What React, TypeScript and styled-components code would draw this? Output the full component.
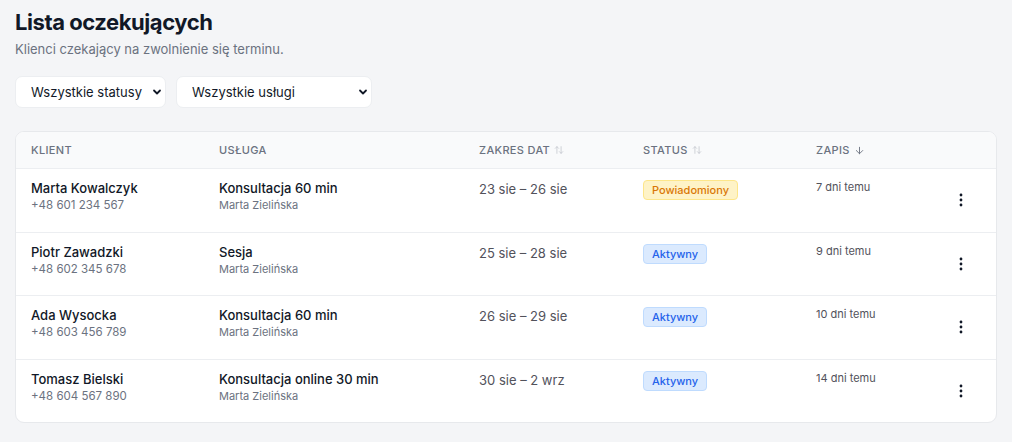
import React from 'react'
import styled, { createGlobalStyle } from 'styled-components'
import { ArrowUpDown, ArrowDown } from 'lucide-react'

const GlobalStyle = createGlobalStyle`
  body {
    margin: 0;
    background: #f4f5f7;
    font-family: Inter, "Noto Sans", "Liberation Sans", sans-serif;
    color: #111827;
  }
`

type Status = 'notified' | 'active'

interface Entry {
  name: string
  phone: string
  service: string
  staff: string
  range: string
  status: Status
  added: string
}

const entries: Entry[] = [
  { name: 'Marta Kowalczyk', phone: '+48 601 234 567', service: 'Konsultacja 60 min', staff: 'Marta Zielińska', range: '23 sie – 26 sie', status: 'notified', added: '7 dni temu' },
  { name: 'Piotr Zawadzki', phone: '+48 602 345 678', service: 'Sesja', staff: 'Marta Zielińska', range: '25 sie – 28 sie', status: 'active', added: '9 dni temu' },
  { name: 'Ada Wysocka', phone: '+48 603 456 789', service: 'Konsultacja 60 min', staff: 'Marta Zielińska', range: '26 sie – 29 sie', status: 'active', added: '10 dni temu' },
  { name: 'Tomasz Bielski', phone: '+48 604 567 890', service: 'Konsultacja online 30 min', staff: 'Marta Zielińska', range: '30 sie – 2 wrz', status: 'active', added: '14 dni temu' },
]

const statusLabel: Record<Status, string> = {
  notified: 'Powiadomiony',
  active: 'Aktywny',
}

const Page = styled.div`
  padding: 8px 15px 20px;
`

const Title = styled.h1`
  margin: 0;
  font-size: 22px;
  line-height: 28px;
  font-weight: 700;
  letter-spacing: -0.02em;
  color: #111827;
`

const Subtitle = styled.p`
  margin: 4px 0 0;
  font-size: 13px;
  line-height: 18px;
  color: #6b7280;
`

const Filters = styled.div`
  display: flex;
  gap: 10px;
  margin-top: 18px;
`

const SelectWrap = styled.div<{ $width: number }>`
  position: relative;
  width: ${p => p.$width}px;
  height: 32px;
`

const Select = styled.select`
  appearance: none;
  width: 100%;
  height: 100%;
  padding: 0 16px 0 15px;
  border: 1px solid #eceef1;
  border-radius: 7px;
  background: #fff;
  font-family: inherit;
  font-size: 13px;
  color: #111827;
  outline: none;
`

const Chevron = styled.svg`
  position: absolute;
  right: 4px;
  top: 50%;
  width: 10px;
  height: 10px;
  transform: translateY(-50%);
  pointer-events: none;
`

const Card = styled.div`
  margin-top: 23px;
  background: #fff;
  border: 1px solid #e7e9ec;
  border-radius: 9px;
  overflow: hidden;
`

const Grid = styled.div`
  display: grid;
  grid-template-columns: 188px 260px 164px 173px 1fr 40px;
  padding: 0 15px;
`

const HeadRow = styled(Grid)`
  height: 36px;
  align-items: center;
  background: #f9fafb;
`

const HeadCell = styled.div<{ $dim?: boolean }>`
  display: flex;
  align-items: center;
  gap: 4px;
  font-size: 11px;
  font-weight: 500;
  letter-spacing: 0.03em;
  text-transform: uppercase;
  color: #6b7280;

  svg {
    color: ${p => (p.$dim ? '#c5c9d0' : '#6b7280')};
  }
`

const Row = styled(Grid)`
  height: 63.5px;
  box-sizing: border-box;
  padding-top: 11px;
  border-top: 1px solid #eceef1;
`

const Cell = styled.div`
  display: flex;
  flex-direction: column;
`

const Primary = styled.span`
  font-size: 13px;
  line-height: 17px;
  font-weight: 500;
  color: #111827;
`

const Secondary = styled.span<{ $small?: boolean }>`
  font-size: ${p => (p.$small ? 11 : 11.5)}px;
  line-height: 16px;
  color: #6b7280;
`

const Range = styled.span`
  font-size: 13px;
  line-height: 18px;
  color: #52525b;
`

const Badge = styled.span<{ $status: Status }>`
  align-self: flex-start;
  padding: 0 8px;
  height: 20px;
  line-height: 18px;
  box-sizing: border-box;
  border-radius: 4px;
  font-size: 11px;
  font-weight: 500;
  border: 1px solid ${p => (p.$status === 'notified' ? '#fde68a' : '#bfdbfe')};
  background: ${p => (p.$status === 'notified' ? '#fef3c7' : '#dbeafe')};
  color: ${p => (p.$status === 'notified' ? '#d97706' : '#2563eb')};
`

const Added = styled.span`
  font-size: 11px;
  line-height: 14px;
  color: #52525b;
`

const MenuButton = styled.button`
  align-self: center;
  justify-self: center;
  margin-top: -11px;
  width: 24px;
  height: 24px;
  padding: 0;
  border: 0;
  background: none;
  display: flex;
  align-items: center;
  justify-content: center;
  cursor: pointer;
`

const SelectBox = ({ width, label }: { width: number; label: string }) => (
  <SelectWrap $width={width}>
    <Select defaultValue={label}>
      <option>{label}</option>
    </Select>
    <Chevron viewBox="0 0 10 10" fill="none">
      <path d="M2 3.5L5 6.5L8 3.5" stroke="#111827" strokeWidth="1.8" strokeLinecap="round" strokeLinejoin="round" />
    </Chevron>
  </SelectWrap>
)

const Dots = () => (
  <svg width="4" height="14" viewBox="0 0 4 14">
    <circle cx="2" cy="2" r="1.4" fill="#111827" />
    <circle cx="2" cy="7" r="1.4" fill="#111827" />
    <circle cx="2" cy="12" r="1.4" fill="#111827" />
  </svg>
)

export default function App() {
  return (
    <Page>
      <GlobalStyle />
      <Title>Lista oczekujących</Title>
      <Subtitle>Klienci czekający na zwolnienie się terminu.</Subtitle>

      <Filters>
        <SelectBox width={151} label="Wszystkie statusy" />
        <SelectBox width={196} label="Wszystkie usługi" />
      </Filters>

      <Card>
        <HeadRow>
          <HeadCell>Klient</HeadCell>
          <HeadCell>Usługa</HeadCell>
          <HeadCell $dim>
            Zakres dat <ArrowUpDown size={10} />
          </HeadCell>
          <HeadCell $dim>
            Status <ArrowUpDown size={10} />
          </HeadCell>
          <HeadCell>
            Zapis <ArrowDown size={11} />
          </HeadCell>
          <HeadCell />
        </HeadRow>

        {entries.map(e => (
          <Row key={e.name}>
            <Cell>
              <Primary>{e.name}</Primary>
              <Secondary>{e.phone}</Secondary>
            </Cell>
            <Cell>
              <Primary>{e.service}</Primary>
              <Secondary $small>{e.staff}</Secondary>
            </Cell>
            <Cell>
              <Range>{e.range}</Range>
            </Cell>
            <Cell>
              <Badge $status={e.status}>{statusLabel[e.status]}</Badge>
            </Cell>
            <Cell>
              <Added>{e.added}</Added>
            </Cell>
            <MenuButton aria-label="Więcej">
              <Dots />
            </MenuButton>
          </Row>
        ))}
      </Card>
    </Page>
  )
}
